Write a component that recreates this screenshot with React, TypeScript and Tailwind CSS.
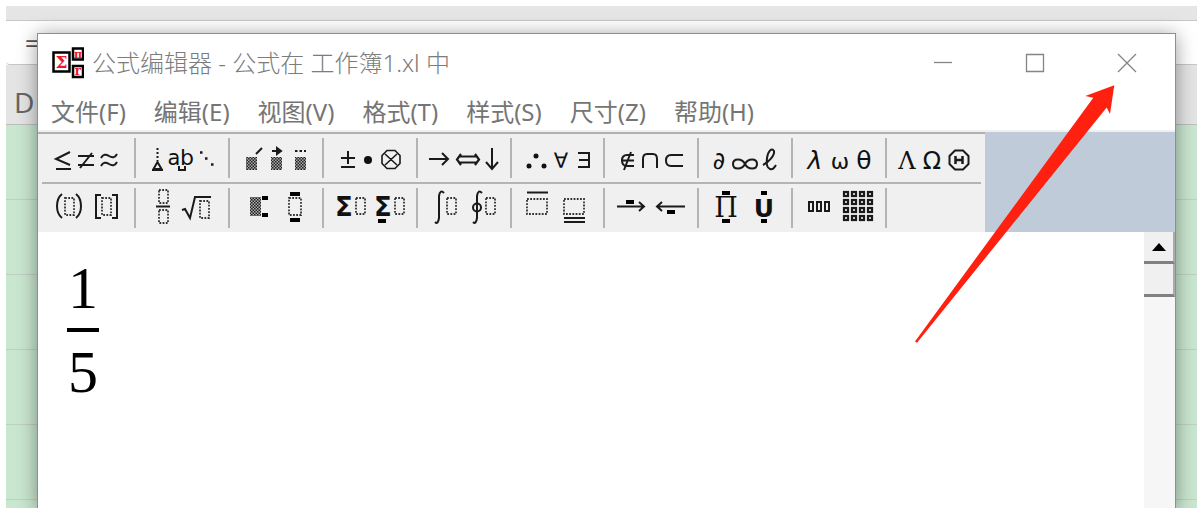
import type { ReactNode } from "react";

const menus = ["文件(F)", "编辑(E)", "视图(V)", "格式(T)", "样式(S)", "尺寸(Z)", "帮助(H)"];

// Dotted placeholder slot used by the template buttons
function Slot({ x, y, w = 10, h = 16 }: { x: number; y: number; w?: number; h?: number }) {
  return <rect x={x} y={y} width={w} height={h} strokeWidth="1.8" strokeDasharray="1.8 1.4" stroke="#333" />;
}

function Hatch({ x, y, w, h }: { x: number; y: number; w: number; h: number }) {
  return <rect x={x} y={y} width={w} height={h} fill="url(#hatch)" stroke="none" />;
}

function Bar({ x, y, w, h = 4 }: { x: number; y: number; w: number; h?: number }) {
  return <rect x={x} y={y} width={w} height={h} fill="#000" stroke="none" />;
}

interface GlyphProps {
  x: number;
  y: number;
  size: number;
  serif?: boolean;
  bold?: boolean;
  italic?: boolean;
  children: string;
}

function Glyph({ x, y, size, serif, bold, italic, children }: GlyphProps) {
  return (
    <text
      x={x}
      y={y}
      fontSize={size}
      fontWeight={bold ? 700 : 400}
      fontStyle={italic ? "italic" : "normal"}
      textAnchor="middle"
      fill="#111"
      stroke="none"
      fontFamily={serif ? '"DejaVu Serif", serif' : '"DejaVu Sans", sans-serif'}
    >
      {children}
    </text>
  );
}

const symbols: { name: string; art: ReactNode }[] = [
  {
    name: "关系符号",
    art: (
      <>
        <path d="M28 18L14 25l14 6M14 35h15" />
        <path d="M36 22h16M36 31h16M38 34L50 19" />
        <path d="M59 24c2-4 5-4 8-2s6 2 8-2M59 32c2-4 5-4 8-2s6 2 8-2" />
      </>
    ),
  },
  {
    name: "间距和省略号",
    art: (
      <>
        <path d="M21.500 14v13" strokeDasharray="2 2" />
        <path d="M21.500 28l-4 7h8zM16 36h11" />
        <Glyph x={38} y={31} size={21}>a</Glyph>
        <Glyph x={51} y={31} size={22}>b</Glyph>
        <path d="M43 32v4h6v-4" />
        <path d="M64 18.500h2.500M69 24.500h2.500M75 30.500h2.500" strokeWidth="2.500" />
      </>
    ),
  },
  {
    name: "修饰符号",
    art: (
      <>
        <Hatch x={16} y={23} w={11} h={13} />
        <path d="M26 20l6-6" />
        <Hatch x={41} y={23} w={11} h={13} />
        <path d="M42 17h9M47 14l4 3-4 3z" />
        <Hatch x={65} y={23} w={11} h={13} />
        <path d="M65 17h11" strokeDasharray="2.500 2" />
      </>
    ),
  },
  {
    name: "运算符号",
    art: (
      <>
        <path d="M17 24h14M24 17v13M17 33h14" />
        <circle cx="44" cy="26" r="4" fill="#111" stroke="none" />
        <path d="M63 16.500h8l5 5v8l-5 5h-8l-5-5v-8zM61 20l12 11M73 20l-12 11" strokeWidth="1.600" />
      </>
    ),
  },
  {
    name: "箭头符号",
    art: (
      <>
        <path d="M11 25h19M24 19l6 6-6 6" />
        <path d="M42 22.500h16M42 28.500h16M43 20l-4 5.500 4 5.500M57 20l4 5.500-4 5.500" strokeWidth="2.200" />
        <path d="M74 14v20M68 28l6 7 6-7" />
      </>
    ),
  },
  {
    name: "逻辑符号",
    art: (
      <>
        <circle cx="24" cy="22" r="2.500" fill="#111" stroke="none" />
        <circle cx="17" cy="32" r="2.500" fill="#111" stroke="none" />
        <circle cx="32" cy="32" r="2.500" fill="#111" stroke="none" />
        <Glyph x={49} y={34} size={21}>∀</Glyph>
        <path d="M66 19h11v14H66M67 26h10" />
      </>
    ),
  },
  {
    name: "集合论符号",
    art: (
      <>
        <path d="M29 21h-7q-5 0-5 5.500t5 5.500h7M17 26.500h12M19 36l7-18" />
        <path d="M38 34V25q0-5 4-5h6q4 0 4 5v9" />
        <path d="M78 21H66q-5 0-5 5.500t5 5.500h12" />
      </>
    ),
  },
  {
    name: "其他符号",
    art: (
      <>
        <Glyph x={20} y={35} size={24}>∂</Glyph>
        <path d="M46 30c-3-6-12-6-12 0s9 6 12 0 12-6 12 0-9 6-12 0" />
        <path d="M64 31c6-3 12-10 11-14-2-4-6 0-7 7s0 10 3 11 4-1 6-4" />
      </>
    ),
  },
  {
    name: "小写希腊字母",
    art: (
      <>
        <Glyph x={22} y={35} size={25} italic>λ</Glyph>
        <Glyph x={47} y={35} size={22}>ω</Glyph>
        <Glyph x={71} y={35} size={25}>θ</Glyph>
      </>
    ),
  },
  {
    name: "大写希腊字母",
    art: (
      <>
        <Glyph x={20} y={35} size={24} serif>Λ</Glyph>
        <Glyph x={45} y={35} size={24}>Ω</Glyph>
        <path d="M68 16.500h8l5.500 5.500v8L76 35.500h-8L62.500 30v-8z" />
        <path d="M68.500 22v8M75.500 22v8M68 26h8" strokeWidth="2.500" />
      </>
    ),
  },
];

const templates: { name: string; art: ReactNode }[] = [
  {
    name: "围栏模板",
    art: (
      <>
        <path d="M20 10q-5 4-5 12t5 12M34 10q5 4 5 12t-5 12M59 11h-5v23h5M70 11h5v23h-5" />
        <Slot x={23} y={14} h={17} w={9} />
        <Slot x={60} y={14} h={17} w={9} />
      </>
    ),
  },
  {
    name: "分式和根式模板",
    art: (
      <>
        <Slot x={23} y={6} w={9} h={13} />
        <path d="M20 22.500h14" />
        <Slot x={23} y={26} w={9} h={13} />
        <path d="M46 26l3-1 5 9 5-21h16" />
        <Slot x={64} y={17} h={17} w={9} />
      </>
    ),
  },
  {
    name: "上标和下标模板",
    art: (
      <>
        <Hatch x={20} y={13} w={11} h={19} />
        <Bar x={32} y={12} w={6} />
        <Bar x={32} y={29} w={6} />
        <Slot x={59} y={14} w={12} h={17} />
        <Bar x={60} y={8} w={10} />
        <Bar x={60} y={34} w={10} />
      </>
    ),
  },
  {
    name: "求和模板",
    art: (
      <>
        <Glyph x={20} y={32} size={26} bold>Σ</Glyph>
        <Slot x={32} y={14} w={9} />
        <Glyph x={59} y={32} size={26} bold>Σ</Glyph>
        <Bar x={54} y={35} w={8} />
        <Slot x={71} y={14} w={9} />
      </>
    ),
  },
  {
    name: "积分模板",
    art: (
      <>
        <path d="M26 9q-4-4-5 3v22q-1 7-4 4" />
        <Slot x={29} y={14} w={9} />
        <path d="M64 9q-4-4-5 3v22q-1 7-4 4" />
        <circle cx="59" cy="23.500" r="4" />
        <Slot x={68} y={14} w={9} />
      </>
    ),
  },
  {
    name: "底线和顶线模板",
    art: (
      <>
        <path d="M15 8.500h21" />
        <Slot x={15} y={15} w={20} h={15} />
        <Slot x={52} y={15} w={20} h={15} />
        <path d="M52 34h21M52 38h21" />
      </>
    ),
  },
  {
    name: "标签箭头模板",
    art: (
      <>
        <path d="M12 22.500h27M34 18l5 4.500-5 4.500M80 22.500H52M57 18l-5 4.500 5 4.500" />
        <Bar x={21} y={16} w={8} />
        <Bar x={62} y={26} w={8} />
      </>
    ),
  },
  {
    name: "乘积和集合论模板",
    art: (
      <>
        <Glyph x={27} y={33} size={27} serif>Π</Glyph>
        <Bar x={23} y={7} w={8} />
        <Bar x={23} y={35} w={8} />
        <Glyph x={65} y={33} size={25} bold>U</Glyph>
        <Bar x={62} y={7} w={6} />
        <Bar x={62} y={35} w={6} />
      </>
    ),
  },
  {
    name: "矩阵模板",
    art: (
      <>
        {[16, 24, 32].map((x) => (
          <rect key={x} x={x} y="18" width="4" height="9" />
        ))}
        {[0, 1, 2, 3].map((row) =>
          [0, 1, 2, 3].map((col) => (
            <rect key={`${row}-${col}`} x={51 + col * 8} y={8 + row * 8} width="4" height="4" strokeWidth="2.200" />
          ))
        )}
      </>
    ),
  },
];

function PaletteRow({ items }: { items: { name: string; art: ReactNode }[] }) {
  return (
    <div className="grid grid-cols-10 py-1">
      {items.map((item, idx) => (
        <button
          key={item.name}
          aria-label={item.name}
          className={`h-10 overflow-hidden ${idx < 9 ? "border-r-2 border-[#b4b4b4]" : ""}`}
        >
          <svg
            viewBox="0 4 90 40"
            className="block h-10 w-[90px]"
            fill="none"
            stroke="#1a1a1a"
            strokeWidth="2"
          >
            {item.art}
          </svg>
        </button>
      ))}
    </div>
  );
}

function Spreadsheet() {
  return (
    <div className="absolute inset-0 flex flex-col overflow-hidden pt-1.5 pl-1.5">
      <div className="h-[15px] shrink-0 border-b border-[#c6c6c6] bg-[#e5e5e5]"></div>
      <div className="flex h-11 shrink-0 items-center rounded-l border-b border-[#c6c6c6] bg-white pl-[19px] text-2xl text-[#555]">
        =
      </div>
      <div className="flex h-[60px] shrink-0 items-end border-b border-[#bdbdbd] bg-[#e4e4e4] pb-1 pl-2 text-[28px] leading-9 text-[#666]">
        D
      </div>
      <div className="grow bg-[#c9e6cf]">
        {[1, 2, 3, 4, 5, 6].map((row) => (
          <div key={row} className="h-[75px] border-b border-[#bfcfc3]"></div>
        ))}
      </div>
    </div>
  );
}

function AppIcon() {
  return (
    <svg width="32" height="32" viewBox="0 0 32 32" className="shrink-0">
      <rect x="1.500" y="5.500" width="16" height="19" fill="#fff" stroke="#000" strokeWidth="2.500" />
      <rect x="21" y="1.500" width="10" height="11" fill="#fff" stroke="#000" strokeWidth="2.500" />
      <rect x="21" y="19" width="10" height="11" fill="#fff" stroke="#000" strokeWidth="2.500" />
      <g fill="#f0142d" fontWeight="700" textAnchor="middle" fontFamily='"DejaVu Serif", serif'>
        <text x="9.500" y="21" fontSize="17">Σ</text>
        <text x="26" y="11" fontSize="11">π</text>
        <text x="26" y="28" fontSize="12">r</text>
      </g>
    </svg>
  );
}

function TitleBar() {
  return (
    <div className="flex h-[58px] items-center pr-0.5 pl-3.5 text-[#7c7c7c]">
      <AppIcon />
      <h1 className="grow pl-2 text-2xl font-light whitespace-nowrap">公式编辑器 - 公式在 工作簿1.xl 中</h1>
      {[
        { name: "最小化", d: "M1 9.500h18" },
        { name: "最大化", d: "M1.500 1.500h17v17h-17z" },
        { name: "关闭", d: "M1 1l18 18M19 1L1 19" },
      ].map((control) => (
        <button key={control.name} aria-label={control.name} className="flex h-full w-[92px] items-center justify-center">
          <svg width="20" height="20" viewBox="0 0 20 20" fill="none" stroke="#858585" strokeWidth="1.300">
            <path d={control.d} />
          </svg>
        </button>
      ))}
    </div>
  );
}

function ScrollBar() {
  return (
    <div className="flex w-[31px] shrink-0 flex-col bg-[#f6f6f6]">
      <button
        aria-label="向上滚动"
        className="flex h-8 items-center justify-center border-r-2 border-b-[3px] border-[#808080] border-r-[#aaa] bg-[#f0f0f0]"
      >
        <svg width="14" height="8" viewBox="0 0 14 8">
          <path d="M7 0l7 8H0z" fill="#000" />
        </svg>
      </button>
      <div className="h-[33px] border-r-2 border-b-[3px] border-[#808080] border-r-[#aaa] bg-[#f0f0f0]"></div>
    </div>
  );
}

export default function App() {
  return (
    <div className='relative min-h-screen overflow-hidden bg-white font-["Noto_Sans","Noto_Sans_CJK_SC",sans-serif]'>
      <svg className="absolute size-0">
        <defs>
          <pattern id="hatch" width="3" height="3" patternUnits="userSpaceOnUse">
            <rect width="3" height="3" fill="#aaa" />
            <path d="M0 0h1.500v1.500H0zM1.500 1.500H3V3H1.500z" fill="#222" />
          </pattern>
        </defs>
      </svg>

      <Spreadsheet />

      {/* Equation editor window */}
      <div className="absolute top-[33px] right-[21px] -bottom-px left-[37px] flex flex-col border border-[#8e8e8e] bg-white shadow-[0_2px_18px_rgba(0,0,0,0.4)]">
        <TitleBar />

        <nav className="flex h-10 shrink-0 gap-7 border-b-2 border-[#f0f0f0] pl-[13px] text-2xl leading-10 text-[#757575]">
          {menus.map((menu) => (
            <button key={menu} className="whitespace-nowrap">
              {menu}
            </button>
          ))}
        </nav>

        {/* Symbol and template palettes */}
        <div className="flex shrink-0 bg-[#bfcbd9]">
          <div className="w-[947px] border-t-2 border-[#b0b0b0] bg-[#f0f0f0] pr-1 pl-1">
            <PaletteRow items={symbols} />
            <div className="border-b-2 border-[#b4b4b4]"></div>
            <PaletteRow items={templates} />
          </div>
        </div>

        <div className="flex grow">
          <div className='grow pt-[26px] pl-[29px] font-["Liberation_Serif",serif] text-[60px] leading-[60px] text-black'>
            <div className="flex w-8 flex-col items-center">
              <span>1</span>
              <span className="my-2.5 h-1 w-full bg-black"></span>
              <span>5</span>
            </div>
          </div>
          <ScrollBar />
        </div>
      </div>

      {/* Arrow pointing at the close button */}
      <svg className="pointer-events-none absolute top-[84px] right-[81px]" width="202" height="260" viewBox="0 0 202 260">
        <path d="M200.300 1.300L171.300 12l8 1.700L1 257.500l2 1.200L192.700 23.500l3.300 6.500z" fill="#ff2010" />
      </svg>
    </div>
  );
}
